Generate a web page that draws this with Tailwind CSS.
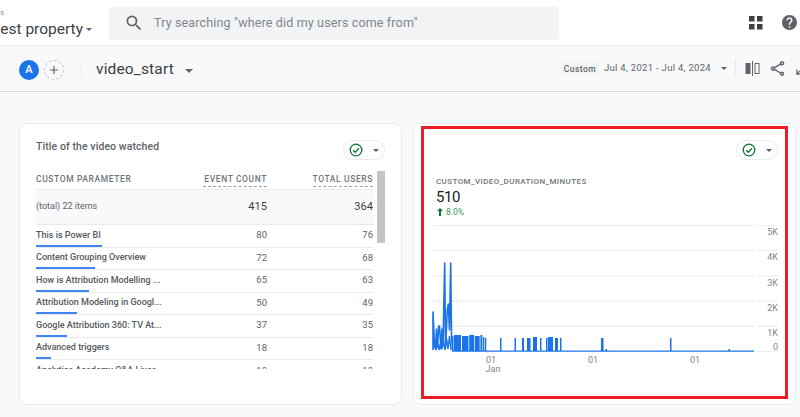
<!DOCTYPE html>
<html lang="en">
<head>
  <meta charset="UTF-8" />
  <title>video_start</title>
  <script src="https://cdn.jsdelivr.net/npm/@tailwindcss/browser@4"></script>
</head>
<body class="w-[800px] h-[417px] overflow-hidden bg-[#f8f9fa] font-['Roboto',sans-serif] text-[#3c4043]">
  <!-- top bar -->
  <header class="h-[46px] bg-white border-b border-[#e8eaed] flex items-center overflow-hidden">
    <div class="w-[109px] h-full shrink-0 relative overflow-hidden">
      <span class="absolute left-0 top-[7px] text-[8px] leading-[12px] text-[#a08c8c]">s</span>
      <div class="absolute right-[17px] top-[17px] flex items-center whitespace-nowrap">
        <span class="text-[15.5px] leading-[24px] text-[#3c4043]">est property</span>
        <span class="ml-[3px] w-0 h-0 border-x-[3.5px] border-x-transparent border-t-[3.5px] border-t-[#5f6368]"></span>
      </div>
    </div>
    <div class="w-[450px] h-[33px] mt-[1px] bg-[#f1f3f4] rounded-[4px] flex items-center">
      <svg class="ml-[15px] w-[20px] h-[20px]" viewBox="0 0 24 24" fill="#5f6368"><path d="M15.5 14h-.79l-.28-.27A6.47 6.47 0 0 0 16 9.5 6.5 6.5 0 1 0 9.5 16c1.61 0 3.09-.59 4.23-1.57l.27.28v.79l5 4.99L20.49 19l-4.99-5zm-6 0C7.01 14 5 11.99 5 9.5S7.01 5 9.5 5 14 7.01 14 9.5 11.99 14 9.5 14z"/></svg>
      <span class="ml-[10px] text-[12.5px] tracking-[0.15px] text-[#80868b] whitespace-nowrap">Try searching "where did my users come from"</span>
    </div>
    <div class="ml-auto flex items-center">
      <svg class="w-[14px] h-[14px] mr-[19px]" viewBox="0 0 14 14" fill="#3c4043"><rect x="0" y="0" width="5.5" height="5.5"/><rect x="8" y="0" width="5.5" height="5.5"/><rect x="0" y="8" width="5.5" height="5.5"/><rect x="8" y="8" width="5.5" height="5.5"/></svg>
      <svg class="w-[15px] h-[15px] mr-[3px]" viewBox="2 2 20 20" fill="#5f6368"><path d="M12 2C6.48 2 2 6.48 2 12s4.48 10 10 10 10-4.48 10-10S17.52 2 12 2zm1 17h-2v-2h2v2zm2.07-7.75l-.9.92C13.45 12.9 13 13.5 13 15h-2v-.5c0-1.1.45-2.1 1.17-2.83l1.24-1.26c.37-.36.59-.86.59-1.41 0-1.1-.9-2-2-2s-2 .9-2 2H8c0-2.21 1.79-4 4-4s4 1.79 4 4c0 .88-.36 1.68-.93 2.25z"/></svg>
    </div>
  </header>

  <!-- report bar -->
  <div class="h-[46px] border-b border-[#dadce0] flex items-center overflow-hidden pt-[3px]">
    <span class="ml-[19px] w-[20px] h-[20px] rounded-full bg-[#1a73e8] text-white text-[11px] font-medium flex items-center justify-center">A</span>
    <span class="ml-[5px] w-[20px] h-[20px] rounded-full border border-dashed border-[#bdc1c6] flex items-center justify-center">
      <svg class="w-[14px] h-[14px]" viewBox="0 0 24 24" fill="#5f6368"><path d="M19 13h-6v6h-2v-6H5v-2h6V5h2v6h6v2z"/></svg>
    </span>
    <span class="ml-[17px] w-px h-[17px] bg-[#e8eaed]"></span>
    <span class="ml-[14px] text-[15.5px] text-[#3c4043] tracking-[0.15px]">video_start</span>
    <span class="ml-[11px] mt-[1px] w-0 h-0 border-x-[4px] border-x-transparent border-t-[4.5px] border-t-[#5f6368]"></span>
    <div class="ml-auto flex items-center whitespace-nowrap mt-[-3px]">
      <span class="h-[12px] px-[3px] bg-[#f1f3f4] rounded-[2px] text-[8.5px] leading-[12px] font-medium tracking-[0.45px] text-[#5f6368]">Custom</span>
      <span class="ml-[5px] text-[9.5px] tracking-[0.3px] text-[#5f6368]">Jul 4, 2021 - Jul 4, 2024</span>
      <span class="ml-[10px] w-0 h-0 border-x-[3px] border-x-transparent border-t-[3px] border-t-[#5f6368]"></span>
      <span class="ml-[8px] w-px h-[17px] bg-[#e8eaed]"></span>
      <svg class="ml-[9px] w-[15px] h-[15px]" viewBox="0 0 15 15"><rect x="0.5" y="2" width="5" height="11" fill="#5f6368"/><rect x="7" y="0" width="1" height="15" fill="#5f6368"/><rect x="10" y="2.500" width="4" height="10" fill="none" stroke="#5f6368"/></svg>
      <svg class="ml-[10px] w-[15px] h-[15px]" viewBox="2 2 20 20" fill="#5f6368"><path d="M18 16.08c-.76 0-1.44.3-1.96.77L8.91 12.7c.05-.23.09-.46.09-.7s-.04-.47-.09-.7l7.05-4.11c.54.5 1.25.81 2.04.81 1.66 0 3-1.34 3-3s-1.34-3-3-3-3 1.34-3 3c0 .24.04.47.09.7L8.04 9.81C7.5 9.31 6.79 9 6 9c-1.66 0-3 1.34-3 3s1.34 3 3 3c.79 0 1.5-.31 2.04-.81l7.12 4.16c-.05.21-.08.43-.08.65 0 1.61 1.31 2.92 2.92 2.92 1.61 0 2.92-1.31 2.92-2.92s-1.31-2.92-2.92-2.92zM18 4c.55 0 1 .45 1 1s-.45 1-1 1-1-.45-1-1 .45-1 1-1zM6 13c-.55 0-1-.45-1-1s.45-1 1-1 1 .45 1 1-.45 1-1 1zm12 7.02c-.55 0-1-.45-1-1s.45-1 1-1 1 .45 1 1-.45 1-1 1z"/></svg>
      <svg class="ml-[10px] mr-[-9px] w-[14px] h-[14px]" viewBox="0 0 15 15" fill="none" stroke="#5f6368" stroke-width="1.300"><path d="M2 13 13 2M8 2h5v5M2 8v5h5"/></svg>
    </div>
  </div>

  <main class="relative flex gap-[11px] pl-[19px] pt-[31px]">
    <!-- table card -->
    <section class="w-[383px] h-[282px] shrink-0 bg-white border border-[#e8eaed] rounded-[8px] pl-[16px] pr-[16px] relative">
      <div class="flex items-start justify-between">
        <h2 class="mt-[16px] text-[10.5px] leading-[14px] font-medium tracking-[0.08px] text-[#5f6368]">Title of the video watched</h2>
        <div class="mt-[16px] w-[42px] h-[20px] rounded-full border border-[#e8eaed] flex items-center pl-[5px]">
          <svg class="w-[14px] h-[14px]" viewBox="0 0 14 14" fill="none"><circle cx="7" cy="7" r="5.8" stroke="#137333" stroke-width="1.3"/><path d="M4.2 7.2 6.2 9.2 10 5.2" stroke="#137333" stroke-width="1.3"/></svg>
          <span class="ml-[10px] w-0 h-0 border-x-[3px] border-x-transparent border-t-[3px] border-t-[#5f6368]"></span>
        </div>
      </div>
      <div class="w-[337px] h-[197px] mt-[12px] overflow-hidden">
        <div class="h-[18px] pt-[1.5px] border-b border-[#e8eaed] flex text-[8.5px] font-medium tracking-[0.6px] text-[#70757a] leading-[11px] whitespace-nowrap">
          <span class="flex-1">CUSTOM PARAMETER</span>
          <span class="w-[64px] h-[13px] text-right border-b border-dashed border-[#9aa0a6]">EVENT COUNT</span>
          <span class="ml-[46px] w-[60px] h-[13px] flex justify-end border-b border-dashed border-[#9aa0a6]">TOTAL USERS</span>
        </div>
        <div class="h-[35px] bg-[#f8f9fa] border-b border-[#e8eaed] flex items-center">
          <span class="flex-1 text-[9px] text-[#5f6368]">(total) 22 items</span>
          <span class="w-[64px] text-right text-[11px] tracking-[0.1px]">415</span>
          <span class="ml-[46px] w-[60px] text-right text-[11px] tracking-[0.1px]">364</span>
        </div>
        <div class="h-[22.5px] border-b border-[#e8eaed] relative flex items-center pb-[1px] text-[#5f6368]">
          <span class="flex-1 font-medium text-[9px] text-[#55595e]">This is Power BI</span>
          <span class="w-[64px] text-right text-[9.5px]">80</span>
          <span class="ml-[46px] w-[60px] text-right text-[9.5px]">76</span>
          <span class="absolute left-0 bottom-0 w-[66px] h-[2px] bg-[#4285f4]"></span>
        </div>
        <div class="h-[22.5px] border-b border-[#e8eaed] relative flex items-center pb-[1px] text-[#5f6368]">
          <span class="flex-1 font-medium text-[9px] text-[#55595e]">Content Grouping Overview</span>
          <span class="w-[64px] text-right text-[9.5px]">72</span>
          <span class="ml-[46px] w-[60px] text-right text-[9.5px]">68</span>
          <span class="absolute left-0 bottom-0 w-[59px] h-[2px] bg-[#4285f4]"></span>
        </div>
        <div class="h-[22.5px] border-b border-[#e8eaed] relative flex items-center pb-[1px] text-[#5f6368]">
          <span class="flex-1 font-medium text-[9px] text-[#55595e]">How is Attribution Modelling ...</span>
          <span class="w-[64px] text-right text-[9.5px]">65</span>
          <span class="ml-[46px] w-[60px] text-right text-[9.5px]">63</span>
          <span class="absolute left-0 bottom-0 w-[53px] h-[2px] bg-[#4285f4]"></span>
        </div>
        <div class="h-[22.5px] border-b border-[#e8eaed] relative flex items-center pb-[1px] text-[#5f6368]">
          <span class="flex-1 font-medium text-[9px] text-[#55595e]">Attribution Modeling in Googl...</span>
          <span class="w-[64px] text-right text-[9.5px]">50</span>
          <span class="ml-[46px] w-[60px] text-right text-[9.5px]">49</span>
          <span class="absolute left-0 bottom-0 w-[41px] h-[2px] bg-[#4285f4]"></span>
        </div>
        <div class="h-[22.5px] border-b border-[#e8eaed] relative flex items-center pb-[1px] text-[#5f6368]">
          <span class="flex-1 font-medium text-[9px] text-[#55595e]">Google Attribution 360: TV At...</span>
          <span class="w-[64px] text-right text-[9.5px]">37</span>
          <span class="ml-[46px] w-[60px] text-right text-[9.5px]">35</span>
          <span class="absolute left-0 bottom-0 w-[31px] h-[2px] bg-[#4285f4]"></span>
        </div>
        <div class="h-[22.5px] border-b border-[#e8eaed] relative flex items-center pb-[1px] text-[#5f6368]">
          <span class="flex-1 font-medium text-[9px] text-[#55595e]">Advanced triggers</span>
          <span class="w-[64px] text-right text-[9.5px]">18</span>
          <span class="ml-[46px] w-[60px] text-right text-[9.5px]">18</span>
          <span class="absolute left-0 bottom-0 w-[15px] h-[2px] bg-[#4285f4]"></span>
        </div>
        <div class="h-[22.5px] flex items-center pb-[1px] text-[#5f6368]">
          <span class="flex-1 font-medium text-[9px] text-[#55595e]">Analytics Academy Q&amp;A Lives</span>
          <span class="w-[64px] text-right text-[9.5px]">18</span>
          <span class="ml-[46px] w-[60px] text-right text-[9.5px]">18</span>
        </div>
      </div>
      <!-- scrollbar -->
      <span class="absolute left-[357px] top-[47px] w-[8px] h-[72px] bg-[#c4c4c4]"></span>
    </section>

    <!-- chart card -->
    <section class="w-[383px] h-[282px] shrink-0 bg-white border border-[#e8eaed] rounded-[8px] pl-[22px] relative">
      <div class="flex justify-end pr-[17px] pt-[16px]">
        <div class="w-[42px] h-[20px] rounded-full border border-[#e8eaed] flex items-center pl-[5px]">
          <svg class="w-[14px] h-[14px]" viewBox="0 0 14 14" fill="none"><circle cx="7" cy="7" r="5.8" stroke="#137333" stroke-width="1.3"/><path d="M4.2 7.2 6.2 9.2 10 5.2" stroke="#137333" stroke-width="1.3"/></svg>
          <span class="ml-[10px] w-0 h-0 border-x-[3px] border-x-transparent border-t-[3px] border-t-[#5f6368]"></span>
        </div>
      </div>
      <p class="mt-[17px] text-[8px] leading-[10px] font-medium tracking-[0.4px] text-[#70757a] whitespace-nowrap">CUSTOM_VIDEO_DURATION_MINUTES</p>
      <p class="text-[15px] leading-[20px] tracking-[-0.4px] text-[#202124]">510</p>
      <p class="flex items-center text-[8.5px] leading-[10px] text-[#3c9a5f]">
        <svg class="ml-[1px] w-[6px] h-[8px] mr-[3px]" viewBox="0 0 6 8" fill="#137333"><path d="M3 0 6 3H4V8H2V3H0z"/></svg>8.0%
      </p>
      <!-- chart drawn on a free canvas -->
      <svg class="absolute left-[18px] top-[100px]" width="350" height="150" viewBox="432 224 350 150">
        <path stroke="#ebedef" stroke-width="1.2" fill="none" d="M433 225.5H754M757 225.5H778M433 250.7H754M757 250.7H778M433 276H754M757 276H778M433 301.2H754M757 301.2H778M433 326.4H754M757 326.4H778M757 351.6H778M487 351V354M593 351V354M700 351V354"/>
        <path fill="none" stroke="#1a73e8" stroke-width="1.6" stroke-linejoin="round" d="M433 350L433 312L434.500 346L435.500 349L436.500 329L437.500 347L438.700 326L439.500 326L441 349L442 329L443 346L444.700 263L445.500 348L447.300 310L448.300 304L449.500 330L450.700 263L451.500 336L452.500 350"/>
        <path fill="none" stroke="#1a73e8" stroke-width="1.4" d="M434 344L436 349L437.500 342L439 350L440.500 343L442 349L443.500 341L445 350L446.500 338L448 349L449.500 336L451 350"/>
        <g fill="#1a73e8">
          <rect x="452" y="336" width="1.500" height="15"/><rect x="454" y="335" width="7" height="16"/>
          <rect x="462" y="336" width="6.500" height="15"/><rect x="469.200" y="335" width="4.800" height="16"/>
          <rect x="474.700" y="336" width="5" height="15"/><rect x="480.400" y="335" width="2" height="16"/>
          <rect x="483" y="337" width="1.200" height="14"/><rect x="484.800" y="338" width="1.500" height="13"/>
          <rect x="500" y="338" width="1.500" height="13"/><rect x="514.500" y="338" width="1.500" height="13"/>
          <rect x="522" y="338" width="2" height="13"/><rect x="527" y="338" width="3.500" height="13"/>
          <rect x="533" y="337" width="4" height="14"/><rect x="540" y="338" width="1.500" height="13"/>
          <rect x="546" y="338" width="1.500" height="13"/><rect x="548" y="337" width="5" height="14"/>
          <rect x="555" y="338" width="3" height="13"/><rect x="560" y="338" width="1.500" height="13"/>
          <rect x="601" y="338" width="2.500" height="13"/><rect x="605.500" y="349" width="1.500" height="2"/>
          <rect x="670" y="338" width="1.500" height="13"/><rect x="728.500" y="349" width="1.500" height="2"/>
        </g>
        <path fill="none" stroke="#1a73e8" stroke-width="1.300" d="M452 351.200H754"/>
        <g fill="#80868b" font-size="9" font-family="Roboto, sans-serif">
          <text x="778" y="235" text-anchor="end">5K</text><text x="778" y="260" text-anchor="end">4K</text>
          <text x="778" y="285.500" text-anchor="end">3K</text><text x="778" y="311" text-anchor="end">2K</text>
          <text x="778" y="336" text-anchor="end">1K</text><text x="778" y="350" text-anchor="end">0</text>
          <text x="491" y="362.500" text-anchor="middle">01</text><text x="493" y="371.500" text-anchor="middle">Jan</text>
          <text x="593" y="362.500" text-anchor="middle">01</text><text x="695" y="362.500" text-anchor="middle">01</text>
        </g>
      </svg>
    </section>
    <!-- highlight drawn over the chart card -->
    <div class="absolute left-[421px] top-[34px] w-[367px] h-[273px] border-[3px] border-[#ee1c25] pointer-events-none"></div>
  </main>
</body>
</html>
